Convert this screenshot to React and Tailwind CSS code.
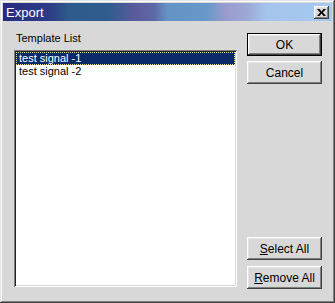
const font = { fontFamily: '"Liberation Sans", Arial, sans-serif' };

const raised =
  "shadow-[inset_-1px_-1px_#404040,inset_1px_1px_#ffffff,inset_-2px_-2px_#808080,inset_2px_2px_#e4e4e4]";

const Button = ({ children, isDefault }) => (
  <div
    className={
      "w-[75px] h-[23px] bg-[#d8d8d8] flex items-center justify-center text-[12px] text-black " +
      (isDefault ? "border border-black " : "") +
      raised
    }
  >
    {children}
  </div>
);

export default function App() {
  return (
    <div
      className="w-[335px] h-[303px] bg-[#d8d8d8] p-[3px] flex flex-col shadow-[inset_-1px_-1px_#404040,inset_1px_1px_#e4e4e4,inset_-2px_-2px_#808080,inset_2px_2px_#ffffff]"
      style={font}
    >
      {/* title bar */}
      <div className="h-[18px] flex items-center justify-between pl-[3px] pr-[3px] bg-[linear-gradient(90deg,#2a2a80_0%,#2c3c86_14%,#2e5a8c_20%,#305c8e_32%,#5a5a9c_40%,#5c6aa8_46%,#6494c6_50%,#6898ca_62%,#9c9cce_68%,#9ca8d4_74%,#a4c4ec_80%,#a6caf0_100%)]">
        <span className="text-white text-[13px] leading-none">Export</span>
        <div
          className={
            "w-[15px] h-[13px] bg-[#d8d8d8] flex items-center justify-center " +
            raised
          }
        >
          <svg width="9" height="7" viewBox="0 0 9 7">
            <path d="M0 0h2.5l2 2.4L6.5 0H9L5.8 3.5 9 7H6.5L4.5 4.6 2.5 7H0l3.2-3.5z" fill="#000" />
          </svg>
        </div>
      </div>

      {/* body */}
      <div className="flex-1 flex">
        <div className="ml-[11px] mt-[11px] mb-[13px] flex flex-col">
          <div className="h-[13px] mb-[5px] pl-[2px] text-[11px] leading-[13px] text-black">
            Template List
          </div>
          <div className="w-[223px] flex-1 bg-white p-[2px] shadow-[inset_1px_1px_#808080,inset_-1px_-1px_#ffffff,inset_2px_2px_#202020,inset_-2px_-2px_#d8d8d8]">
            <div className="h-[13px] bg-[#0a2a6a] border border-dotted border-[#f0e08c] text-white text-[11px] leading-[11px] pl-[2px]">
              test signal -1
            </div>
            <div className="h-[13px] text-black text-[11px] leading-[13px] pl-[3px]">
              test signal -2
            </div>
          </div>
        </div>

        <div className="ml-[10px] mt-[12px] mb-[11px] flex flex-col">
          <Button isDefault>OK</Button>
          <div className="h-[5px]" />
          <Button>Cancel</Button>
          <div className="flex-1" />
          <Button>
            <span>
              <u>S</u>elect All
            </span>
          </Button>
          <div className="h-[6px]" />
          <Button>
            <span>
              <u>R</u>emove All
            </span>
          </Button>
        </div>
      </div>
    </div>
  );
}
